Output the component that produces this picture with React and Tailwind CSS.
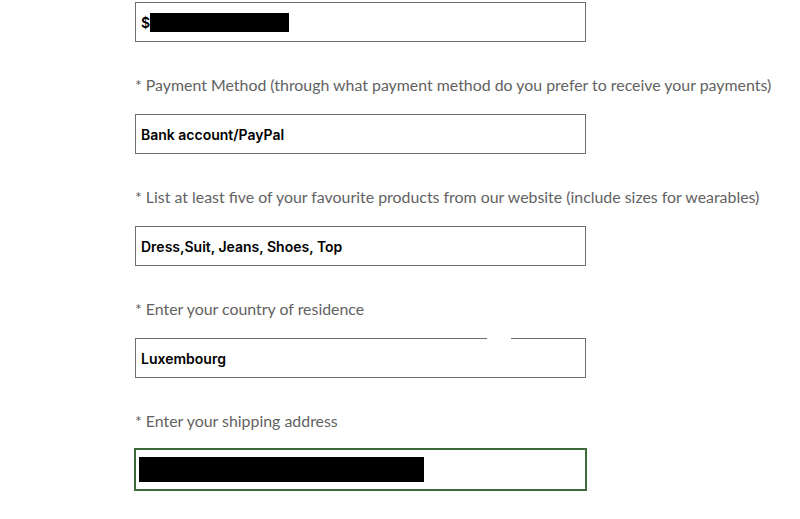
import React from "react";

const fields = [
  { label: "* Payment Method (through what payment method do you prefer to receive your payments)", value: "Bank account/PayPal" },
  { label: "* List at least five of your favourite products from our website (include sizes for wearables)", value: "Dress,Suit, Jeans, Shoes, Top" },
  { label: "* Enter your country of residence", value: "Luxembourg", gap: true },
  { label: "* Enter your shipping address", value: "", focused: true },
];

export default function App() {
  return (
    <div className="w-[800px] h-[519px] bg-white overflow-hidden relative">
      <div className="pl-[135px] pt-[2px] flex flex-col">
        <div className="w-[451px] h-[40px] border border-[#6f6f6f] flex items-center pl-[5px] font-['Inter',sans-serif] font-semibold text-[14px] text-black">
          <span>$</span>
          <span className="w-[139px] h-[19px] bg-black"></span>
        </div>
        {fields.map((f, i) => (
          <div key={i} className="flex flex-col">
            <div className="mt-[33px] h-[20px] flex items-center font-['Lato',sans-serif] font-normal text-[15.9px] text-[#626262] whitespace-nowrap">
              {f.label}
            </div>
            {f.focused ? (
              <div className="mt-[17px] -ml-[1px] w-[453px] h-[43px] border-[2px] border-[#3f6b3a] flex items-center pl-[3px]">
                <span className="w-[285px] h-[25px] bg-black"></span>
              </div>
            ) : (
              <div className="mt-[19px] w-[451px] h-[40px] border border-[#6f6f6f] flex items-center pl-[5px] font-['Inter',sans-serif] font-semibold text-[14px] text-black relative">
                {f.value}
                {f.gap && <span className="absolute -top-[1px] left-[351px] w-[24px] h-[2px] bg-white"></span>}
              </div>
            )}
          </div>
        ))}
      </div>
    </div>
  );
}
